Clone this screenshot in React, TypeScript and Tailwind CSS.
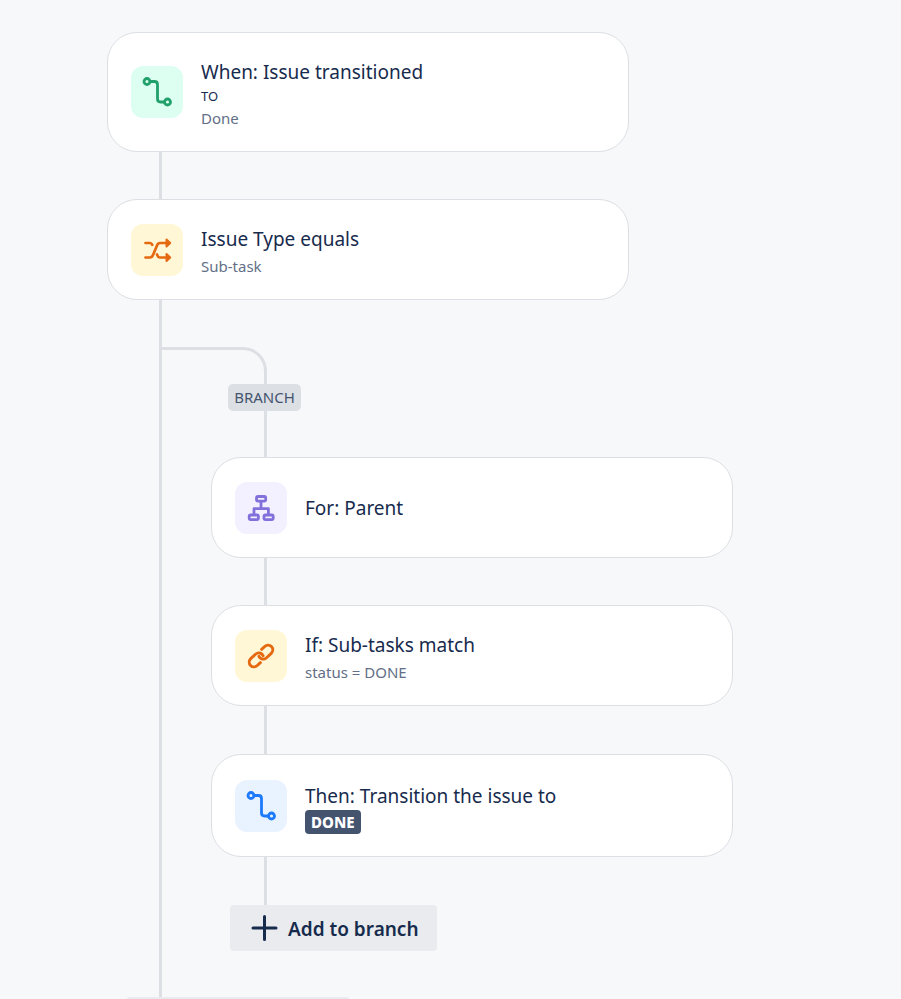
import type { ReactNode } from 'react';

function IconTile({ className, children }: { className: string; children: ReactNode }) {
  return (
    <span className={`flex size-[52px] shrink-0 items-center justify-center rounded-xl ${className}`}>
      {children}
    </span>
  );
}

function TransitionIcon() {
  return (
    <svg width="32" height="32" viewBox="0 0 32 32" fill="none" stroke="currentColor" strokeWidth="2.8" strokeLinecap="round" strokeLinejoin="round" aria-hidden="true">
      <circle cx="6" cy="5.500" r="3" />
      <circle cx="26.500" cy="26" r="3" />
      <path d="M9 5.500h4.500q3 0 3 3V23q0 3 3 3h4" />
    </svg>
  );
}

function ShuffleIcon() {
  return (
    <svg width="32" height="32" viewBox="0 0 32 32" fill="none" stroke="currentColor" strokeWidth="2.700" strokeLinecap="round" strokeLinejoin="round" aria-hidden="true">
      <path d="M4.500 9H9q1.500 0 2.200 1.800M4.500 23.500h4.500q2 0 3-2.400l4-9.700q1-2.400 3-2.400h8M16 20.500l.6 1.300q.7 1.700 2.400 1.700h8" />
      <path d="M25.500 5.500 29.200 9l-3.700 3.500zM25.500 20l3.700 3.500-3.700 3.500z" fill="currentColor" strokeWidth="2" />
    </svg>
  );
}

function TreeIcon() {
  return (
    <svg width="32" height="32" viewBox="0 0 32 32" fill="none" stroke="currentColor" strokeWidth="2.800" strokeLinejoin="round" aria-hidden="true">
      <rect x="11.500" y="4.500" width="9.200" height="4.600" rx="1.500" />
      <rect x="4.200" y="23" width="9.200" height="4.600" rx="1.500" />
      <rect x="19" y="23" width="9.200" height="4.600" rx="1.500" />
      <path d="M16 9v7.500M9 23v-6.300h14.400V23" />
    </svg>
  );
}

function LinkIcon() {
  return (
    <svg width="28" height="28" viewBox="0 0 24 24" fill="none" stroke="currentColor" strokeWidth="2.500" strokeLinecap="round" strokeLinejoin="round" aria-hidden="true">
      <path d="M10.200 12.300a4 4 0 0 0 6.300 1.400l4.300-4a4 4 0 0 0-5.600-5.900l-2.700 2.500" />
      <path d="M13.800 11.700a4 4 0 0 0-6.300-1.400l-4.300 4a4 4 0 0 0 5.600 5.900l2.700-2.500" />
    </svg>
  );
}

function Card({ icon, title, className, children }: { icon: ReactNode; title: string; className?: string; children?: ReactNode }) {
  return (
    <article className={`flex w-full max-w-[522px] items-center gap-[18px] rounded-[30px] border border-[#dcdfe4] bg-white px-[23px] ${className ?? 'min-h-[101px]'}`}>
      {icon}
      <div className={children ? 'min-w-0 pt-1' : 'min-w-0'}>
        <h2 className="text-[19px] leading-7 text-[#172b4d]">{title}</h2>
        {children}
      </div>
    </article>
  );
}

function Detail({ children }: { children: ReactNode }) {
  return <p className="text-[15px] leading-[26px] text-[#626f86]">{children}</p>;
}

function Connector({ className }: { className: string }) {
  return <div className={`w-[3px] bg-[#dcdfe4] ${className}`} />;
}

export default function App() {
  return (
    <main className="h-screen overflow-hidden bg-[#f7f8fa] pt-8 pr-4 pl-[107px] font-['Noto_Sans','Open_Sans',sans-serif]">
      <Card
        className="min-h-[120px]"
        title="When: Issue transitioned"
        icon={<IconTile className="bg-[#dcfff1] text-[#22a06b]"><TransitionIcon /></IconTile>}
      >
        <p className="text-[13px] leading-5 text-[#172b4d]">TO</p>
        <p className="text-[15px] leading-6 text-[#626f86]">Done</p>
      </Card>
      <Connector className="ml-[52px] h-[47px]" />
      <Card
        title="Issue Type equals"
        icon={<IconTile className="bg-[#fff7d6] text-[#e56910]"><ShuffleIcon /></IconTile>}
      >
        <Detail>Sub-task</Detail>
      </Card>

      <section className="ml-[52px] border-l-[3px] border-[#dcdfe4] pt-[47px] pb-[46px]">
        <div className="h-[37px] w-[105px] rounded-tr-[24px] border-t-[3px] border-r-[3px] border-[#dcdfe4]" />
        <div className="ml-[49px]">
          <div className="ml-[17px] flex h-[27px] w-[73px] items-center justify-center rounded-[5px] bg-[#dcdfe4] text-[15px] text-[#44546f]">
            BRANCH
          </div>
          <Connector className="ml-[53px] h-[46px]" />
          <Card
            title="For: Parent"
            icon={<IconTile className="bg-[#f3f0ff] text-[#8270db]"><TreeIcon /></IconTile>}
          />
          <Connector className="ml-[53px] h-[47px]" />
          <Card
            title="If: Sub-tasks match"
            icon={<IconTile className="bg-[#fff7d6] text-[#e56910]"><LinkIcon /></IconTile>}
          >
            <Detail>status = DONE</Detail>
          </Card>
          <Connector className="ml-[53px] h-[48px]" />
          <Card
            className="min-h-[103px]"
            title="Then: Transition the issue to"
            icon={<IconTile className="bg-[#e9f2ff] text-[#1d7afc]"><TransitionIcon /></IconTile>}
          >
            <p className="flex">
              <span className="rounded bg-[#44546f] px-[6px] text-[15px] leading-6 font-extrabold text-white">DONE</span>
            </p>
          </Card>
          <Connector className="ml-[53px] h-[48px]" />
          <button type="button" className="ml-[19px] flex h-[46px] items-center gap-[10px] rounded bg-[#e9ebee] pr-[18px] pl-[21px] text-[19px] font-semibold text-[#172b4d]">
            <svg width="27" height="27" viewBox="0 0 27 27" fill="none" stroke="currentColor" strokeWidth="3" strokeLinecap="round" aria-hidden="true">
              <path d="M13.500 1.500v23M2 13h23" />
            </svg>
            <span className="pt-[2px]">Add to branch</span>
          </button>
        </div>
      </section>
      <button type="button" aria-label="Add component" className="ml-[19px] block h-[46px] w-[224px] rounded bg-[#e9ebee]" />
    </main>
  );
}
